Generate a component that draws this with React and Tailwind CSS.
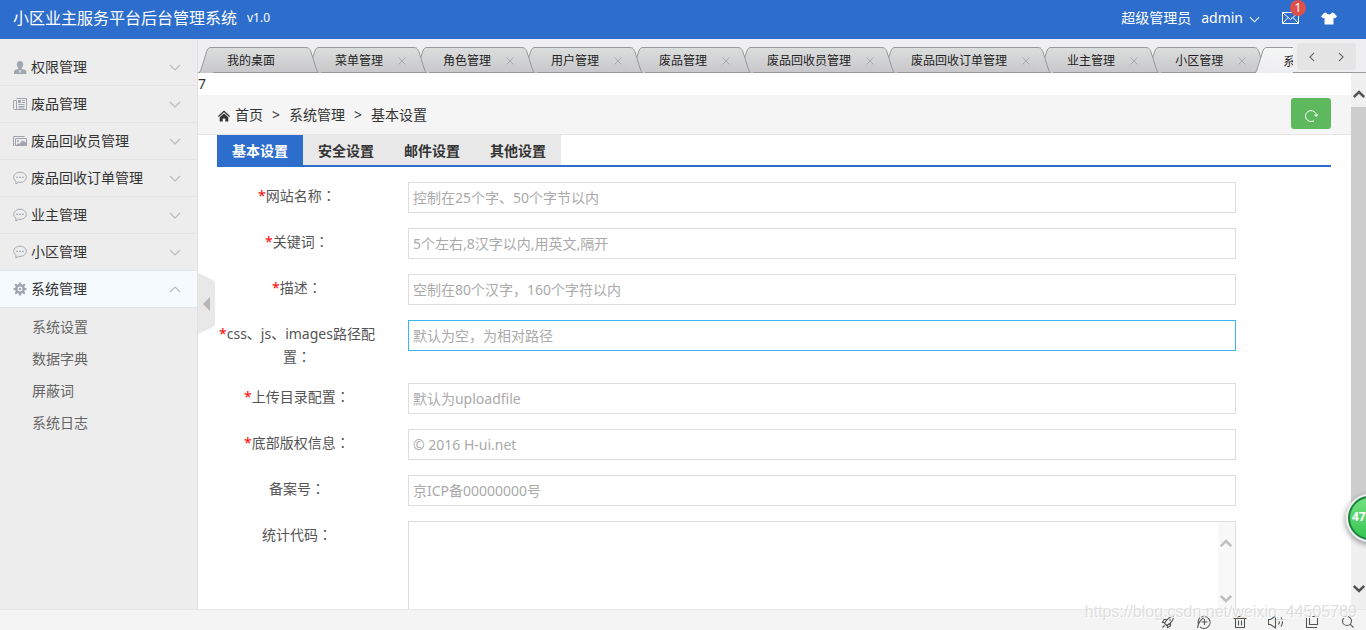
import React, { useState } from 'react';

const menus = [
  { label: '权限管理', icon: 'user' },
  { label: '废品管理', icon: 'news' },
  { label: '废品回收员管理', icon: 'image' },
  { label: '废品回收订单管理', icon: 'chat' },
  { label: '业主管理', icon: 'chat' },
  { label: '小区管理', icon: 'chat' },
  { label: '系统管理', icon: 'gear', children: ['系统设置', '数据字典', '屏蔽词', '系统日志'] },
];

const pageTabs = ['我的桌面', '菜单管理', '角色管理', '用户管理', '废品管理', '废品回收员管理', '废品回收订单管理', '业主管理', '小区管理', '系统设置'];

const settingTabs = ['基本设置', '安全设置', '邮件设置', '其他设置'];

const fields = [
  { id: 'title', label: '网站名称', required: true, placeholder: '控制在25个字、50个字节以内' },
  { id: 'keywords', label: '关键词', required: true, placeholder: '5个左右,8汉字以内,用英文,隔开' },
  { id: 'description', label: '描述', required: true, placeholder: '空制在80个汉字，160个字符以内' },
  { id: 'static', label: 'css、js、images路径配置', required: true, placeholder: '默认为空，为相对路径', active: true },
  { id: 'upload', label: '上传目录配置', required: true, placeholder: '默认为uploadfile' },
  { id: 'copyright', label: '底部版权信息', required: true, placeholder: '© 2016 H-ui.net' },
  { id: 'icp', label: '备案号', required: false, placeholder: '京ICP备00000000号' },
];

const Chevron = ({ d = 'M1 1l5 5 5-5', className = '' }) => (
  <svg viewBox="0 0 12 7" className={className} fill="none" stroke="currentColor" strokeWidth="1.2"><path d={d} /></svg>
);

const MenuIcon = ({ name }) => {
  const cls = 'w-[14px] h-[14px] shrink-0 text-[#a0a5af]';
  if (name === 'user') {
    return (
      <svg viewBox="0 0 14 14" className={cls} fill="currentColor">
        <path d="M7 1c2 0 3.200 1.300 3.200 3.300 0 1.600-.7 2.900-1.500 3.600v1l3.500 1c.8.3 1.100.9 1.100 1.600V14H1v-2.500c0-.7.3-1.300 1.100-1.600l3.200-1v-1C4.400 7.200 3.800 5.900 3.800 4.300 3.800 2.300 5 1 7 1z" />
        <path d="M6.300 10h1.400l.5 2.500H5.800z" fill="#ddd" />
      </svg>
    );
  }
  if (name === 'news') {
    return (
      <svg viewBox="0 0 14 14" className={cls} fill="none" stroke="currentColor">
        <path d="M3.500 1.500h10v11h-12c-.7 0-1-.4-1-1v-8h3v8c0 .6-.4 1-1 1M5.500 7.500h6M5.500 9.500h6M5.500 11h6" />
        <path d="M9 3.500h3M9 5.500h3" />
        <path d="M5 3h3v3H5z" fill="currentColor" stroke="none" />
      </svg>
    );
  }
  if (name === 'image') {
    return (
      <svg viewBox="0 0 14 14" className={cls} fill="none" stroke="currentColor">
        <path d="M1.500 11.500h-1v-9h11M2.500 4.500h11v7h-11z" />
        <circle cx="5" cy="7" r="1" fill="currentColor" stroke="none" />
        <path d="M3 11.500l2-2.500 1.500 1L9 6.500l4.500 2v3.500H3z" fill="currentColor" stroke="none" />
      </svg>
    );
  }
  if (name === 'chat') {
    return (
      <svg viewBox="0 0 14 14" className={cls} fill="none" stroke="currentColor">
        <path d="M7 1.200c3.500 0 6.300 2.300 6.300 5.100S10.500 11.400 7 11.400c-.5 0-1 0-1.500-.1L2.800 13l.3-2.700C1.600 9.400.7 8 .7 6.300c0-2.800 2.800-5.100 6.300-5.100z" />
        <path d="M3.300 5.700h1.600v1.400H3.300zM6.200 5.700h1.600v1.400H6.200zM9.100 5.700h1.600v1.400H9.100z" fill="currentColor" stroke="none" />
      </svg>
    );
  }
  return (
    <svg viewBox="0 0 14 14" className={cls} fill="none" stroke="currentColor">
      <circle cx="7" cy="7" r="3.700" strokeWidth="2.600" />
      <circle cx="7" cy="7" r="1.200" fill="currentColor" stroke="none" />
      <path d="M7 .5v2.500M7 11v2.500M.5 7H3M11 7h2.500M2.200 2.200L4 4M10 10l1.800 1.800M11.800 2.200L10 4M4 10l-1.800 1.800" strokeWidth="2.200" />
    </svg>
  );
};

const PageTab = ({ label, index, active }) => {
  const fill = active ? 'url(#tab-on)' : 'url(#tab-off)';
  return (
    <li className="relative flex h-[26px] shrink-0 -mr-3" style={{ zIndex: active ? 20 : 15 - index }}>
      <svg viewBox="0 0 14 26" className="w-[14px] h-[26px] shrink-0">
        <path d="M0 26C1 26 1.500 24 2.500 21L7.500 5C8.500 2 9.500 0 12 0H14V26z" fill={fill} />
        <path d="M0 25.500C1 25.500 1.500 24 2.500 21L7.500 5C8.500 2 9.500.5 12 .5H14" fill="none" stroke="#999" />
      </svg>
      <div className={`flex items-center border-t border-[#999] pl-[14px] pt-[2px] ${active ? 'bg-linear-to-b from-[#f5f6f6] to-[#ededf0]' : 'bg-linear-to-b from-[#dcdddd] to-[#c8c8ca] border-b'}`}>
        <a href="#" className="text-xs text-[#222] whitespace-nowrap">{label}</a>
        <span className="w-[30px] flex items-center justify-end">
          {index > 0 && (
            <button aria-label={`关闭${label}`} className="w-[22px] h-4 flex items-center justify-center">
              <svg viewBox="0 0 8 8" className="w-2 h-2" stroke="#a5aab2"><path d="M.5.5l7 7M7.500.5l-7 7" /></svg>
            </button>
          )}
        </span>
      </div>
      <svg viewBox="0 0 14 26" className="w-[14px] h-[26px] shrink-0">
        <path d="M0 0C3 0 4.500 1 6 5L11 21C12 24 12.500 26 14 26H0z" fill={fill} />
        <path d="M0 .5C3 .5 4.500 1 6 5L11 21C12 24 12.500 25.500 14 25.500" fill="none" stroke="#999" />
        {!active && <path d="M0 25.500H14" stroke="#999" />}
      </svg>
    </li>
  );
};

const Header = () => (
  <header className="h-[39px] shrink-0 bg-[#2d6dcc] text-white flex items-start justify-between pl-[13px] pr-[29px]">
    <div className="flex items-center gap-[10px] h-[35px]">
      <h1 className="text-base">小区业主服务平台后台管理系统</h1>
      <span className="text-xs">v1.0</span>
    </div>
    <div className="flex items-center text-sm h-9">
      <span>超级管理员</span>
      <button className="flex items-center gap-[6px] ml-[10px]">
        admin
        <Chevron className="w-[11px] h-[7px] mt-[2px]" />
      </button>
      <a href="#" aria-label="消息" className="relative ml-[22px]">
        <svg viewBox="0 0 17 12" className="w-[17px] h-3" fill="none" stroke="currentColor"><path d="M.5.5h16v11H.5zM.5.5l8 7 8-7M.5 11.500l5.500-6M16.500 11.500l-5.500-6" /></svg>
        <span className="absolute -top-3 left-2 w-4 h-4 rounded-full bg-[#dd514c] text-xs leading-4 text-center">1</span>
      </a>
      <button aria-label="换肤" className="ml-[22px]">
        <svg viewBox="0 0 16 13" className="w-4 h-[13px]" fill="currentColor"><path d="M5 .5c.6 1.300 1.700 2 3 2s2.400-.7 3-2L13 1l3 3.500-2.300 2L12.500 5.500V12.500h-9V5.500L2.300 6.500 0 4.500 3 1z" /></svg>
      </button>
    </div>
  </header>
);

const Sidebar = () => (
  <aside className="w-[198px] shrink-0 bg-[#ededed] border-r border-[#e2e2e2] pt-[10px]">
    {menus.map((m) => (
      <div key={m.label}>
        <button className={`w-full h-[37px] flex items-center gap-1 pl-[13px] pr-4 border-b border-[#e2e4e6] text-sm text-[#333] ${m.children ? 'bg-[#f5faff]' : ''}`}>
          <MenuIcon name={m.icon} />
          <span className="flex-1 text-left">{m.label}</span>
          <Chevron d={m.children ? 'M1 6l5-5 5 5' : undefined} className="w-3 h-[7px] text-[#bbb]" />
        </button>
        {m.children && (
          <ul className="py-[3px] pl-8 text-sm text-[#666]">
            {m.children.map((c) => (
              <li key={c} className="h-8 flex items-center"><a href="#">{c}</a></li>
            ))}
          </ul>
        )}
      </div>
    ))}
  </aside>
);

const TabBar = () => (
  <nav className="h-[34px] shrink-0 bg-[#efeef0] border-b border-[#999] flex">
    <ul className="flex flex-1 min-w-0 overflow-hidden pt-2 pl-px -mb-px">
      {pageTabs.map((t, i) => <PageTab key={t} label={t} index={i} active={i === pageTabs.length - 1} />)}
    </ul>
    <div className="shrink-0 w-[73px] pl-1 pr-[10px] pt-1">
      <div className="h-[27px] bg-[#e5e5e5] rounded-[3px] flex items-center justify-around text-[#666]">
        <button aria-label="上一个"><svg viewBox="0 0 7 12" className="w-[6px] h-[10px]" fill="none" stroke="currentColor" strokeWidth="1.300"><path d="M6 1L1 6l5 5" /></svg></button>
        <button aria-label="下一个"><svg viewBox="0 0 7 12" className="w-[6px] h-[10px]" fill="none" stroke="currentColor" strokeWidth="1.300"><path d="M1 1l5 5-5 5" /></svg></button>
      </div>
    </div>
  </nav>
);

const Breadcrumb = () => (
  <div className="h-10 shrink-0 bg-[#f5f5f5] border-b border-[#e5e5e5] flex items-center justify-between pl-5 pr-5 text-sm text-[#333]">
    <div className="flex items-center">
      <svg viewBox="0 0 14 13" className="w-3 h-3 mr-[5px] mt-[2px]" fill="currentColor"><path d="M7 0l7 6.500-1 1.200L7 2.200 1 7.700 0 6.500z" /><path d="M7 3.500l5 4.500v5H8.500V9.500h-3V13H2V8z" /></svg>
      <a href="#">首页</a>
      <span className="w-[26px] text-center">&gt;</span>
      <span>系统管理</span>
      <span className="w-[26px] text-center">&gt;</span>
      <span>基本设置</span>
    </div>
    <button aria-label="刷新" className="w-10 h-[31px] mb-[2px] rounded-[3px] bg-[#5eb95e] text-white flex items-center justify-center">
      <svg viewBox="0 0 14 14" className="w-[14px] h-[14px] mt-1" fill="none" stroke="currentColor"><path d="M10 11.700A5.500 5.500 0 1 1 12.500 7M10.300 5.800l2.200 1.500 1.200-2" /></svg>
    </button>
  </div>
);

const FieldLabel = ({ id, required, children }) => (
  <label htmlFor={id} className="w-[14%] shrink-0 ml-[2px] mr-[33px] pt-[2px] leading-[23px] text-center text-[#555]">
    {required && <span className="text-[#f00]">*</span>}
    {children}
    <span className="font-['Noto_Sans_CJK_TC',sans-serif]">：</span>
  </label>
);

const ScrollArrow = ({ up }) => (
  <svg viewBox="0 0 12 8" className="w-3 h-2" fill="none" stroke="currentColor" strokeWidth="2.500">
    <path d={up ? 'M.8 7L6 2l5.200 5' : 'M.8 1L6 6l5.200-5'} />
  </svg>
);

const SettingsForm = () => {
  const [tab, setTab] = useState(0);
  return (
    <form className="pl-[19px] pr-5 text-sm">
      <div className="flex border-b-2 border-[#2d6dcc]">
        {settingTabs.map((t, i) => (
          <button
            type="button"
            key={t}
            onClick={() => setTab(i)}
            className={`h-[30px] px-[15px] pt-[2px] font-bold ${i === tab ? 'bg-[#2d6dcc] text-white' : 'bg-[#e8e8e8] text-[#333]'}`}
          >
            {t}
          </button>
        ))}
      </div>
      <div className="pt-[15px] flex flex-col gap-[15px]">
        {fields.map((f) => (
          <div key={f.id} className="flex items-start">
            <FieldLabel id={f.id} required={f.required}>{f.label}</FieldLabel>
            <input
              id={f.id}
              type="text"
              placeholder={f.placeholder}
              className={`w-[828px] max-w-full h-[31px] px-1 border bg-white placeholder:text-[#aaa] outline-none ${f.active ? 'border-[#3bb4f2]' : 'border-[#ddd]'}`}
            />
          </div>
        ))}
        <div className="flex items-start">
          <FieldLabel id="stat">统计代码</FieldLabel>
          <div className="w-[828px] max-w-full h-[100px] border border-[#ddd] flex">
            <textarea id="stat" className="flex-1 resize-none outline-none px-1" />
            <div className="w-[17px] bg-[#f8f8f8] text-[#bfbfbf] flex flex-col items-center justify-between pt-[17px] pb-[17px]">
              <ScrollArrow up />
              <ScrollArrow />
            </div>
          </div>
        </div>
      </div>
    </form>
  );
};

const StatusIcon = ({ label, d }) => (
  <button aria-label={label}>
    <svg viewBox="0 0 16 16" className="w-4 h-4" fill="none" stroke="currentColor" strokeWidth="1.100"><path d={d} /></svg>
  </button>
);

const StatusBar = () => (
  <footer className="relative h-[21px] shrink-0 bg-[#f4f4f4] border-t border-[#e6e6e6] flex items-center justify-end gap-5 pt-[3px] pr-[10px] text-[#555]">
    <StatusIcon label="加速" d="M13.500 2.500C9.500 2.500 7 4.500 4.500 9.500l2 2C11.500 9 13.500 6.500 13.500 2.500zM7 5.500H4L2.500 8.500h2.500M10.500 9v3L7.500 13.500V11M4.500 11.500L2.500 13.500M9.500 5.500l1 1" />
    <StatusIcon label="下载" d="M4 12.800a6 6 0 1 0 1-9.600M1.500 14C2 9 4.500 5 10 2.500M2.500 11C1 7 3 3.500 6 2.500M8.500 5v6M5.500 8h6" />
    <StatusIcon label="清理" d="M1.500 4.500h13M5.500 4V2.500h5V4M3.500 4.500v9h9v-9M6.500 6.500v5M9.500 6.500v5" />
    <StatusIcon label="声音" d="M.5 5.500v5h2L7.500 14V2L2.500 5.500zM10.500 5.500c1 1.500 1 3.500 0 5M13 3.500c2 3 2 6 0 9" />
    <StatusIcon label="窗口" d="M5.500 2.500h8v8h-8zM2.500 4v9.500H13" />
    <StatusIcon label="搜索" d="M7 2.500a4.500 4.500 0 1 0 0 9 4.500 4.500 0 0 0 0-9zM10.300 10.300l3.200 3.200" />
    <span className="absolute right-[9px] -top-2 text-base leading-5 font-['Liberation_Sans',sans-serif] text-[#d8d8d8]/80 whitespace-nowrap [text-shadow:1px_1px_0_#fff] pointer-events-none">https://blog.csdn.net/weixin_44505789</span>
  </footer>
);

export default function App() {
  return (
    <div className="relative h-screen flex flex-col overflow-hidden bg-white font-['Noto_Sans','Noto_Sans_CJK_SC',sans-serif]">
      <svg className="absolute w-0 h-0" aria-hidden="true">
        <defs>
          <linearGradient id="tab-off" x2="0" y2="1"><stop stopColor="#dcdddd" /><stop offset="1" stopColor="#c8c8ca" /></linearGradient>
          <linearGradient id="tab-on" x2="0" y2="1"><stop stopColor="#f5f6f6" /><stop offset="1" stopColor="#ededf0" /></linearGradient>
        </defs>
      </svg>
      <Header />
      <div className="flex flex-1 min-h-0">
        <Sidebar />
        <main className="relative flex-1 min-w-0 flex flex-col">
          <TabBar />
          {/* sidebar toggle */}
          <button aria-label="收起菜单" className="absolute left-0 top-[234px]">
            <svg viewBox="0 0 17 61" className="w-[17px] h-[61px]"><path d="M0 0l13 6q4 2 4 5v39q0 3-4 5L0 61z" fill="#e8e8e8" /><path d="M12 24v14L5 31z" fill="#b5b5b5" /></svg>
          </button>
          <div className="flex flex-1 min-h-0">
            <div className="flex-1 min-w-0 overflow-hidden">
              <p className="h-[22px] text-sm leading-[22px] text-[#333]">7</p>
              <Breadcrumb />
              <SettingsForm />
            </div>
            <div className="w-[15px] shrink-0 bg-[#f0f0f0] text-[#555] flex flex-col items-center pt-[17px] pb-4">
              <ScrollArrow up />
              <div className="w-full flex-1 mt-[9px] mb-[78px] bg-[#cdcdcd]" />
              <ScrollArrow />
            </div>
          </div>
        </main>
      </div>
      <StatusBar />
      {/* floating speed ball */}
      <div className="absolute -right-7 bottom-[88px] w-12 h-12 rounded-full border-2 border-[#eee] shadow-[0_2px_6px_#888]">
        <div className="w-full h-full rounded-full border-2 border-[#17843f] bg-linear-to-b from-[#70e080] to-[#35c552] pl-[2px] text-white text-xs font-bold leading-[38px]">47%</div>
      </div>
    </div>
  );
}
